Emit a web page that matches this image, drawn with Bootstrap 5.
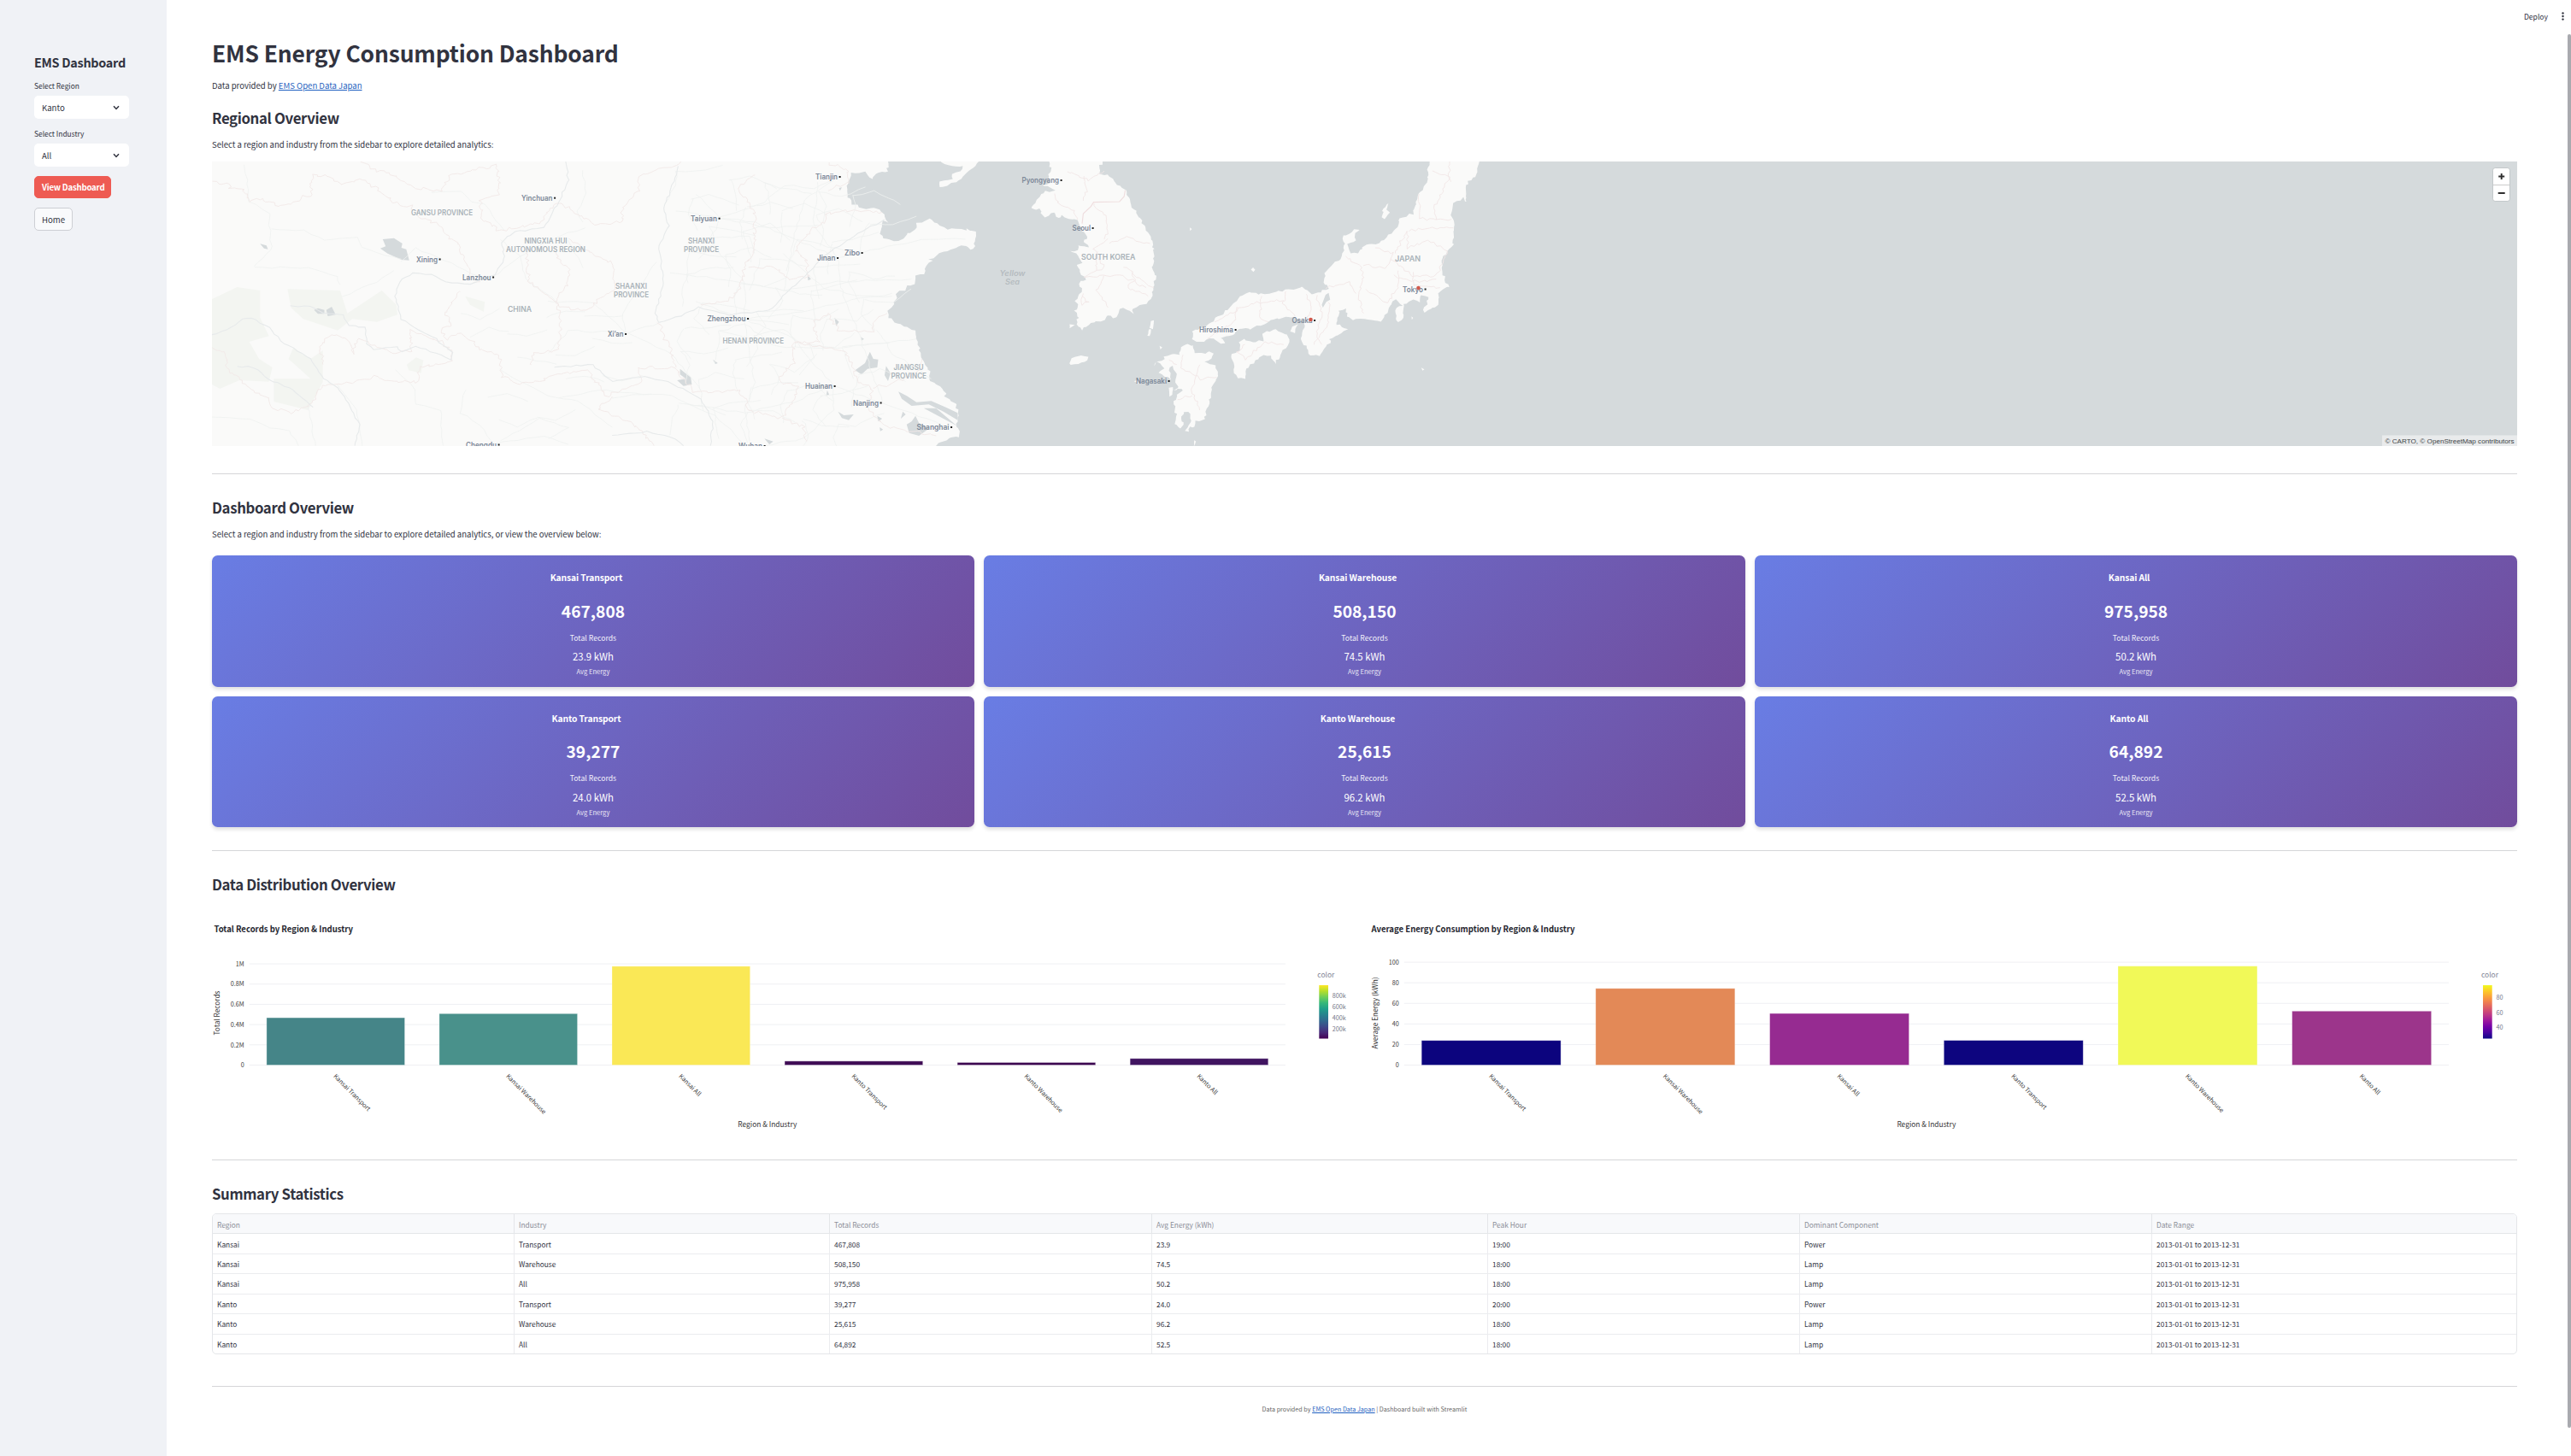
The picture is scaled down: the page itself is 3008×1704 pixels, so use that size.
<!DOCTYPE html>
<html lang="en">
<head>
<meta charset="utf-8">
<title>EMS Energy Consumption Dashboard</title>
<link href="https://cdn.jsdelivr.net/npm/bootstrap@5.3.0/dist/css/bootstrap.min.css" rel="stylesheet">
<style>
:root{--ink:#31333f;--panel:#f0f2f6}
html,body{height:100%}
body{font-family:"Noto Sans CJK JP","Noto Sans CJK SC","Open Sans",sans-serif;font-size:9.6px;line-height:16px;color:var(--ink);background:#fff;overflow:hidden}
.ems-shell{height:1704px}
.ems-side{width:195px;flex:none;background:var(--panel);padding:63px 44px 0 40px}
.ems-side h2{font-size:14.4px;line-height:20px;font-weight:600;margin:0 0 9px;white-space:nowrap;letter-spacing:-.27px}
.ems-label{font-size:8.4px;line-height:16px;margin-bottom:4px;display:block}
.ems-select{height:27px;background:#fff;border-radius:5px;padding:0 11px 0 9px;margin-bottom:9px}
.ems-btn{height:26px;border-radius:5px;font-size:9.6px;line-height:16px;padding:4px 9px;white-space:nowrap}
.ems-red,.ems-red:hover{background:#ee5b53;color:#fff;border:1px solid #ee5b53;font-weight:600;padding:4px 8px;width:90px;letter-spacing:-.2px;margin-top:11px}
.ems-plain{background:#f9fafc;color:var(--ink);border:1px solid #cdcfd4;height:27px;width:45px;padding:4px 0;margin-top:11px}
.ems-main{flex:1;padding:0 63px 0 53px;position:relative}
.ems-top{position:absolute;right:7px;top:11px;gap:15px;font-size:8.6px}
.ems-scroll{position:absolute;right:0;top:40px;width:4px;height:1631px;background:#a9aaaf;border-radius:2px}
h1{font-size:26.4px;line-height:36px;font-weight:700;margin:0;padding-top:44px;height:80px;letter-spacing:-.14px}
h3{font-size:16.8px;line-height:22px;height:22px;font-weight:600;margin:0;letter-spacing:-.36px}
.ems-p{margin:12px 0 0;height:16px;letter-spacing:-.02px}
a{color:#1f5fc0;text-decoration:underline}
.ems-rule{height:1px;background:#d5d6d8}
.ems-map{height:333px;margin-top:12px}
svg{display:block}
.ems-cards{display:grid;grid-template-columns:repeat(3,1fr);column-gap:10.67px;row-gap:11px;margin-top:17px}
.ems-kpi{height:153.5px;border-radius:6.67px;color:#fff;background:linear-gradient(135deg,#697de4 0%,#714c9c 100%);box-shadow:0 2.67px 4px rgba(0,0,0,.12);padding-top:17px;text-align:center}
.k-t{font-size:10.3px;font-weight:700;line-height:18px;margin-right:16px;letter-spacing:-.1px}
.k-n{font-size:19.2px;font-weight:700;line-height:28px;margin-top:15.5px}
.k-l{font-size:8.7px;line-height:16px;margin-top:10px;opacity:.92}
.k-e{font-size:11.4px;line-height:18px;margin-top:4.5px}
.k-s{font-size:7.6px;line-height:14px;margin-top:2px;opacity:.85}
.ems-charts{gap:11px}
.ems-stats{border:1px solid #e4e6e9;border-radius:5px;overflow:hidden;margin-top:12px;height:165px}
.ems-stats table{table-layout:fixed;width:100%;margin:0;font-size:8.35px;line-height:14px;border-collapse:separate;border-spacing:0}
.ems-stats td,.ems-stats th{height:23.43px;padding:0 5px;vertical-align:middle;border:0 solid #ebecef;border-bottom-width:1px;border-right-width:1px;color:var(--ink)}
.ems-stats th{background:#f8f9fb;color:#8b8e98;font-weight:400;border-color:#e4e6e9;padding-top:1px}
.ems-stats tr>:last-child{border-right-width:0}
.ems-stats tbody tr:last-child td{border-bottom-width:0}
.ems-foot{font-size:7.2px;color:#666;text-align:center;margin-top:18px}
</style>
<script src="https://cdn.jsdelivr.net/npm/bootstrap@5.3.0/dist/js/bootstrap.bundle.min.js"></script>
</head>
<body>
<div class="ems-shell d-flex">
<aside class="ems-side">
  <h2>EMS Dashboard</h2>
  <label class="ems-label">Select Region</label>
  <div class="ems-select d-flex align-items-center justify-content-between"><span>Kanto</span><svg width="8" height="6" viewBox="0 0 8 6"><path d="M1 1.2 4 4.4 7 1.2" fill="none" stroke="#31333f" stroke-width="1.5"/></svg></div>
  <label class="ems-label">Select Industry</label>
  <div class="ems-select d-flex align-items-center justify-content-between"><span>All</span><svg width="8" height="6" viewBox="0 0 8 6"><path d="M1 1.2 4 4.4 7 1.2" fill="none" stroke="#31333f" stroke-width="1.5"/></svg></div>
  <button class="btn ems-btn ems-red d-block">View Dashboard</button>
  <button class="btn ems-btn ems-plain d-block">Home</button>
</aside>
<main class="ems-main">
  <div class="ems-top d-flex align-items-center"><span>Deploy</span><svg width="5" height="12" viewBox="0 0 5 12"><g fill="#31333f"><circle cx="2.5" cy="2.4" r="1.2"/><circle cx="2.5" cy="6" r="1.2"/><circle cx="2.5" cy="9.6" r="1.2"/></g></svg></div>
  <div class="ems-scroll"></div>
  <h1>EMS Energy Consumption Dashboard</h1>
  <p class="ems-p">Data provided by <a href="#">EMS Open Data Japan</a></p>
  <h3 style="margin-top:19px">Regional Overview</h3>
  <p class="ems-p">Select a region and industry from the sidebar to explore detailed analytics:</p>
  <div class="ems-map">
  <svg id="map" width="2697" height="333" viewBox="248 189 2697 333">
    <rect x="248" y="189" width="2697" height="333" fill="#d5dadc"/>
    <g transform="translate(240 180) scale(.57398 .33333)">
      <g class="land" fill="#fafaf9">
        <path d="M0,0 L1395,0 1395,30 1392,45 1388,68 1370,66 1358,88 1345,66 1318,68 1312,90 1306,115 1308,150 1320,175 1335,190 1375,195 1385,215 1393,240 1380,235 1376,270 1382,298 1405,308 1425,302 1430,280 1445,270 1452,245 1475,229 1488,238 1490,242 1512,262 1529,265 1550,268 1550,262 1573,277 1567,305 1570,325 1560,338 1550,322 1535,325 1498,352 1475,372 1484,378 1470,395 1468,420 1450,430 1445,455 1430,465 1425,480 1412,485 1403,530 1392,545 1392,575 1410,595 1445,622 1455,670 1458,700 1468,740 1478,770 1480,800 1508,830 1508,855 1528,875 1536,910 1530,945 1537,965 1537,995 1515,1000 1488,1026 1488,1060 0,1060Z"/>
        <path d="M1498,0 L1500,30 1515,40 1530,45 1545,42 1540,62 1522,70 1524,90 1497,98 1497,118 1512,112 1520,102 1532,100 1545,80 1556,60 1566,50 1576,27 1578,0Z"/>
      </g>
      <g fill="#f3f5f1"><path d="M14,510 65,468 112,480 112,575 130,640 90,660 110,720 137,750 130,800 70,795 30,825 14,810Z"/><path d="M168,475 275,480 290,560 360,480 390,530 392,565 350,590 300,580 270,620 200,580 175,540Z"/><path d="M240,690 215,720 180,680 170,720 215,790 140,790 140,870 210,900 240,800Z"/><path d="M530,500 570,520 568,555 540,530Z M411,740 430,715 445,725 440,770 415,760Z"/></g>
      <g fill="#d5dadc">
        <path d="M362,300 385,296 402,315 400,330 410,335 416,374 400,372 372,350 357,332 368,325Z"/>
        <path d="M112,316 125,322 128,335 120,332Z M222,548 230,542 243,548 243,562 230,562Z M247,548 258,537 266,565 250,570Z"/>
        <path d="M1283,575 1292,590 1286,605Z M1336,643 1343,650 1338,656Z M1355,695 1362,720 1372,722 1370,750 1350,755 1338,775 1325,760 1345,735Z M1388,745 1397,770 1392,798 1385,778Z"/>
        <path d="M1413,835 1430,850 1450,872 1480,868 1510,890 1534,910 1534,935 1505,905 1475,880 1440,885 1420,860Z M1465,893 1490,893 1532,955 1505,930Z"/>
        <path d="M1448,920 1440,940 1430,950 1435,980 1455,990 1475,965 1455,945Z M1290,905 1302,918 1322,915 1312,935 1298,928Z M1370,920 1380,930 1372,940Z M1422,905 1428,915 1418,930Z M1375,960 1382,968 1376,974Z M1268,830 1272,845 1266,850Z M1245,832 1240,852Z"/>
        <path d="M968,755 990,785 992,810 975,815 962,795 980,790 968,775Z M1035,722 1045,735 1040,738Z M1228,425 1235,440 1229,445Z M1292,120 1298,118 1294,130Z M1140,1000 1158,1010 1150,1020Z"/>
      </g>
      <g id="roads" fill="none" stroke="#eff1f0" stroke-width=".8"></g>
      <g id="borders" fill="none" stroke="#f2e9e8" stroke-width=".9"></g>
      <g id="rivers" fill="none" stroke="#e7eaeb" stroke-width="1.1"></g>
    </g>
    <g transform="translate(1100 180) scale(.44643 .33333)">
      <g class="land" fill="#fafaf9">
        <path d="M285,0 L285,27 290,50 283,80 285,100 268,110 300,125 295,130 268,135 253,160 248,180 238,192 262,195 265,212 275,222 300,205 310,228 320,218 362,235 370,262 385,290 378,312 392,325 360,322 362,340 342,345 362,356 370,385 360,390 370,425 385,440 362,455 372,475 355,515 362,535 352,552 362,575 357,592 372,620 388,598 410,590 430,585 440,565 460,578 470,542 490,545 505,560 505,542 522,530 540,530 555,500 560,450 567,430 557,400 560,340 553,300 537,260 520,220 500,180 485,125 460,100 445,78 420,68 415,50 428,27 428,0Z"/>
        <path d="M338,735 345,718 370,708 388,712 386,725 362,738 342,740Z"/>
        <path d="M553,588 561,585 558,615 549,612Z M547,615 553,618 549,640 543,640Z"/>
        <path d="M1282,0 L1280,27 1277,100 1252,140 1240,210 1205,225 1195,265 1165,300 1140,315 1108,325 1097,348 1075,347 1068,318 1090,300 1085,290 1097,265 1085,268 1055,290 1060,325 1055,360 1030,390 1008,420 1005,450 1018,470 1000,480 1000,490 965,490 950,468 935,478 905,478 870,490 825,492 810,485 785,500 765,530 740,560 715,585 698,605 670,620 660,622 660,655 690,660 700,652 715,650 735,665 748,668 738,645 765,640 782,615 815,615 850,600 865,585 905,572 930,575 950,590 958,605 945,645 948,662 962,680 965,700 980,708 995,712 1005,685 1022,665 1022,650 1050,630 1066,618 1050,600 1040,600 1045,550 1065,545 1065,570 1080,583 1120,580 1155,588 1170,555 1180,535 1192,510 1210,530 1193,545 1193,578 1203,588 1213,572 1215,530 1230,520 1240,512 1255,520 1255,505 1262,495 1278,502 1275,525 1267,545 1270,555 1285,545 1303,530 1305,485 1335,465 1325,450 1315,410 1318,360 1345,320 1347,240 1338,210 1345,170 1372,155 1380,172 1378,120 1385,95 1405,80 1415,27 1415,0Z"/>
        <path d="M938,598 930,615 930,630 917,625 922,608Z"/>
        <path d="M797,650 810,660 845,655 845,632 862,622 880,618 910,635 914,665 890,705 880,735 865,712 845,708 820,735 800,765 798,790 778,790 768,770 770,740 760,712 785,690 785,665Z"/>
        <path d="M650,668 663,675 665,700 695,705 705,692 714,700 712,720 692,730 722,742 725,765 730,775 720,800 712,820 705,870 692,935 670,935 668,955 655,960 650,978 643,972 658,945 653,905 640,905 632,930 640,955 630,962 613,945 618,915 612,880 622,845 637,835 625,822 617,800 620,780 610,748 600,752 605,790 590,785 575,768 585,750 570,730 590,725 588,715 605,705 627,705 630,682Z"/>
        <path d="M600,820 610,820 608,845 600,852Z M612,830 625,820 620,830Z M508,800 518,795 520,808Z M566,730 560,745Z M665,1005 670,1010 665,1028Z M575,675 582,680 577,686Z"/>
        <path d="M1175,173 1170,195 1178,205 1165,230 1156,222 1162,205 1158,200Z M820,400 826,408 820,416 814,408Z M655,260 660,265 655,270Z M1236,570 1240,575 1236,583Z M1260,752 1268,758 1264,762Z M340,600 352,600 340,614Z"/>
      </g>
      <path d="M1018,488 1022,512 1012,520 1003,540 1000,530 1010,495Z" fill="#d5dadc"/>
      <g id="jborders" fill="none" stroke="#f2e7e6" stroke-width=".9"></g>
      <path d="M372,245 375,210 395,185 402,170 470,168 482,150 485,128" fill="none" stroke="#efdedf" stroke-width="1.2" vector-effect="non-scaling-stroke"/>
    </g>
    <g id="labels"></g>
    <g transform="translate(2917 197)">
      <rect x="-.5" y="-.5" width="20" height="39" rx="2.7" fill="#fff" stroke="#c3c8ca"/>
      <path d="M0 19.5H19.5" stroke="#ccc"/>
      <path d="M9.700 6V13M6.200 9.500H13.200M5.700 29H13.700" stroke="#2f2f2f" stroke-width="1.900"/>
    </g>
    <rect x="2787" y="509.500" width="158" height="12.500" fill="#e9ebec"/>
    <text x="2790.500" y="518.500" font-size="8" fill="#3c3f45" textLength="151" lengthAdjust="spacingAndGlyphs" font-family="Liberation Sans, sans-serif">© CARTO, © OpenStreetMap contributors</text>
  </svg>
  </div>
  <div class="ems-rule" style="margin-top:32px"></div>
  <h3 style="margin-top:28px">Dashboard Overview</h3>
  <p class="ems-p">Select a region and industry from the sidebar to explore detailed analytics, or view the overview below:</p>
  <section class="ems-cards">
    <div class="ems-kpi"><div class="k-t">Kansai Transport</div><div class="k-n">467,808</div><div class="k-l">Total Records</div><div class="k-e">23.9 kWh</div><div class="k-s">Avg Energy</div></div>
    <div class="ems-kpi"><div class="k-t">Kansai Warehouse</div><div class="k-n">508,150</div><div class="k-l">Total Records</div><div class="k-e">74.5 kWh</div><div class="k-s">Avg Energy</div></div>
    <div class="ems-kpi"><div class="k-t">Kansai All</div><div class="k-n">975,958</div><div class="k-l">Total Records</div><div class="k-e">50.2 kWh</div><div class="k-s">Avg Energy</div></div>
    <div class="ems-kpi"><div class="k-t">Kanto Transport</div><div class="k-n">39,277</div><div class="k-l">Total Records</div><div class="k-e">24.0 kWh</div><div class="k-s">Avg Energy</div></div>
    <div class="ems-kpi"><div class="k-t">Kanto Warehouse</div><div class="k-n">25,615</div><div class="k-l">Total Records</div><div class="k-e">96.2 kWh</div><div class="k-s">Avg Energy</div></div>
    <div class="ems-kpi"><div class="k-t">Kanto All</div><div class="k-n">64,892</div><div class="k-l">Total Records</div><div class="k-e">52.5 kWh</div><div class="k-s">Avg Energy</div></div>
  </section>
  <div class="ems-rule" style="margin-top:27px"></div>
  <h3 style="margin-top:28px">Data Distribution Overview</h3>
  <div class="ems-charts d-flex">
    <svg id="c1" width="1343" height="311" viewBox="248 1046 1343 311"></svg>
    <svg id="c2" width="1343" height="311" viewBox="1602 1046 1343 311"></svg>
  </div>
  <div class="ems-rule"></div>
  <h3 style="margin-top:28px">Summary Statistics</h3>
  <div class="ems-stats">
  <table>
    <colgroup><col style="width:353px"><col style="width:369px"><col style="width:377px"><col style="width:393px"><col style="width:365px"><col style="width:412px"><col></colgroup>
    <thead><tr><th>Region</th><th>Industry</th><th>Total Records</th><th>Avg Energy (kWh)</th><th>Peak Hour</th><th>Dominant Component</th><th>Date Range</th></tr></thead>
    <tbody>
    <tr><td>Kansai</td><td>Transport</td><td>467,808</td><td>23.9</td><td>19:00</td><td>Power</td><td>2013-01-01 to 2013-12-31</td></tr>
    <tr><td>Kansai</td><td>Warehouse</td><td>508,150</td><td>74.5</td><td>18:00</td><td>Lamp</td><td>2013-01-01 to 2013-12-31</td></tr>
    <tr><td>Kansai</td><td>All</td><td>975,958</td><td>50.2</td><td>18:00</td><td>Lamp</td><td>2013-01-01 to 2013-12-31</td></tr>
    <tr><td>Kanto</td><td>Transport</td><td>39,277</td><td>24.0</td><td>20:00</td><td>Power</td><td>2013-01-01 to 2013-12-31</td></tr>
    <tr><td>Kanto</td><td>Warehouse</td><td>25,615</td><td>96.2</td><td>18:00</td><td>Lamp</td><td>2013-01-01 to 2013-12-31</td></tr>
    <tr><td>Kanto</td><td>All</td><td>64,892</td><td>52.5</td><td>18:00</td><td>Lamp</td><td>2013-01-01 to 2013-12-31</td></tr>
    </tbody>
  </table>
  </div>
  <div class="ems-rule" style="margin-top:37px"></div>
  <div class="ems-foot">Data provided by <a href="#">EMS Open Data Japan</a> | Dashboard built with Streamlit</div>
</main>
</div>
<script>
const $=id=>document.getElementById(id);
// deterministic noise for coastlines and boundaries
let seed=7;const rnd=()=>(seed=(seed*16807)%2147483647)/2147483647-.5;
function rough(pts,amp,step,close){
  const out=[];const n=close?pts.length:pts.length-1;
  for(let i=0;i<n;i++){const a=pts[i],b=pts[(i+1)%pts.length];
    const k=Math.max(1,Math.round(Math.hypot(b[0]-a[0],b[1]-a[1])/step));
    for(let j=0;j<k;j++){const t=j/k;out.push([(a[0]+(b[0]-a[0])*t+rnd()*amp).toFixed(1),(a[1]+(b[1]-a[1])*t+rnd()*amp*1.4).toFixed(1)]);}}
  if(!close)out.push(pts[pts.length-1]);
  return 'M'+out.map(p=>p.join(',')).join(' ')+(close?'Z':'');
}
const parse=s=>{const v=s.match(/-?[\d.]+/g).map(Number),r=[];for(let i=0;i<v.length;i+=2)r.push([v[i],v[i+1]]);return r;};
document.querySelectorAll('.land path').forEach(p=>p.setAttribute('d',p.getAttribute('d').split('Z').filter(s=>s.trim()).map(s=>rough(parse(s),s.length>150?6:2,9,true)).join('')));
function lines(id,arr,amp,step){$(id).innerHTML=arr.map(s=>`<path vector-effect="non-scaling-stroke" d="${rough(parse(s),amp,step,false)}"/>`).join('');}
lines('borders',[
 '14,98 50,105 50,120 78,125 90,165 115,160 150,185 190,165 195,150 215,148 220,70 250,80 285,110 320,88 350,125 380,165 400,180 420,185 440,225 480,250 500,300 515,310 520,350 535,390 540,430 560,450 545,455',
 '320,27 350,60 380,70 410,105 430,120 480,128 500,75 540,60 590,40 600,80 598,140 560,160 565,230 600,270 680,245 700,200 720,170 760,210 800,250 850,235 850,190 885,130 885,80 920,55 950,50 970,27',
 '520,480 500,530 490,560 500,600 480,620 490,650 520,630 550,660 560,690 600,710 605,780 640,810 690,800 700,780 780,760 820,850 890,800 880,750 960,750 975,790 1000,840 1090,830 1110,900 1175,930 1200,870 1210,820 1175,800 1170,780 1200,740 1200,660 1250,660 1240,590 1270,560 1290,620 1360,620 1370,570 1390,560',
 '925,590 935,640 950,690 960,750','14,680 40,700 45,760 100,830 130,860 135,890 175,910 210,890 240,810 310,800 350,780 370,800 430,800 440,750 500,730 505,700 480,660 420,620 420,690 390,700 310,650 300,700 290,650 260,635 235,670 240,740',
 '740,300 800,360 830,380 835,470 800,515 780,550 720,540 715,510 740,460 740,400 720,370 715,330','1120,75 1085,120 1120,200 1120,330 1100,400 1090,480 1060,520 1010,530','1110,395 1160,400 1190,440 1230,430 1225,370 1200,340 1240,260 1265,240 1265,210 1310,200 1380,205',
 '1270,30 1310,60 1315,100 1275,120 1270,130','655,340 660,450 715,520 725,580 720,690 670,700 665,740','1200,660 1260,680 1300,690 1320,740 1330,800 1360,820 1350,900 1390,960 1490,990','830,850 800,900 850,930 880,960 915,1025','1175,930 1220,960 1225,1010','1360,820 1400,810 1460,760 1460,720'
],8,7);
const roads=['80,40 85,90 90,165 130,210 135,340 100,395','135,265 200,270 245,300 310,290 320,330 400,370','100,398 210,400 270,430 275,460','280,500 350,450 385,410','460,135 520,130 545,170 570,180 610,270','600,300 640,360 655,440 715,520','590,430 650,350 720,290 775,260','770,60 775,140 760,200 770,240','740,300 770,400','700,520 790,520 860,630 930,590','860,630 740,620 700,700','860,630 850,560 920,380','860,630 950,700 1010,830','400,380 430,330 560,430','14,925 90,930 130,960 170,970 190,1025','210,885 225,1025','270,810 310,900 320,1025','390,760 430,830 430,880 480,900 485,1025','530,830 520,910 560,950 590,1020','590,1020 690,990 740,1020','600,1010 680,930 740,960 700,1000','1000,140 1050,225 1140,170 1180,110 1240,120 1290,80','1050,225 1030,300 1060,370 1100,450 1100,580','1050,225 1120,240 1290,365 1340,345 1460,300 1550,300','1100,580 1200,560 1300,520 1400,490','1100,580 1110,700 1120,800 1100,900 1110,1010','1100,580 1200,650 1280,815 1375,870 1520,960','1250,100 1240,250 1290,365 1300,500 1330,620 1380,870','1180,350 1260,470 1340,500 1400,500','950,420 1060,440 1180,480 1290,450 1440,440','1000,520 1100,580 1190,600','1290,80 1220,160 1200,300 1180,480','960,200 1050,225 1150,260 1250,250','980,880 1100,910 1200,870 1280,815','1280,815 1280,900 1220,1000 1140,1025','720,860 800,830 950,850 1040,920 1100,1020','600,760 700,850 760,870 830,960','1050,620 1170,680 1290,680 1450,650','1370,620 1400,700 1480,790','1000,300 1110,290 1120,350'];
// secondary road net over the densely connected east
for(let i=0;i<46;i++){const x=960+(i*137)%400,y=60+(i*211)%900;roads.push(`${x},${y} ${x+45+rnd()*30},${y+rnd()*60} ${x+95},${y+rnd()*90}`);roads.push(`${x},${y} ${x+rnd()*40},${y+50} ${x+rnd()*50},${y+110}`);}
for(let i=0;i<14;i++){const x=520+(i*97)%330,y=560+(i*73)%430;roads.push(`${x},${y} ${x+40},${y+rnd()*60} ${x+80},${y+rnd()*60}`);}
lines('roads',roads,5,18);
lines('rivers',['14,635 45,620 75,580 95,575 130,610 160,665 215,720 240,790 270,820 300,900 315,950 305,1025','175,535 215,535 240,560 280,565 295,600 325,610 330,670 345,685 390,680 400,695 430,675 480,705 500,725 505,700 470,650 400,580 387,500 400,440 425,418 460,425 490,450 540,455 590,425 610,370 605,310 630,275 690,260 720,170 740,90 735,27','965,45 950,120 935,190 945,250 925,320 935,450 918,560 925,592 960,575 1005,540 1070,565 1150,550 1190,480 1230,420 1260,360 1330,280 1385,230','710,750 790,740 830,800 895,780 945,800 1010,860 1035,940 1030,1025','65,745 100,750 130,790 180,830 220,890','830,990 900,975 960,1000 975,1025'],4,12);
lines('jborders',['300,140 310,175 350,200 360,230','375,75 385,120 375,165','330,60 390,95 430,60','400,175 435,220 440,270 430,300','440,310 490,295 550,315','440,300 400,330 430,400 380,430 420,430 480,430 540,470','410,340 410,410','480,395 500,410 510,440 490,470 545,500','370,500 390,520 370,530 375,490','430,430 410,480 440,540','500,420 560,470','1255,140 1255,225 1300,235 1340,230','1300,230 1295,190 1335,80 1290,60','1335,100 1335,27','1225,270 1290,260 1345,260','1190,350 1225,270 1225,330 1280,305 1330,340 1300,430 1240,430 1180,370','1060,360 1100,390 1110,430 1095,500 1110,560','1110,390 1170,400 1190,350 1140,330','1115,480 1170,520 1200,470 1200,410','1190,430 1250,450 1300,440','1240,420 1240,460 1310,470','1012,470 1070,450 1090,490','960,490 975,540 960,590','985,500 1000,560 985,640 1000,670','1020,520 1015,600 980,670','905,480 900,530 930,570','840,495 840,580 860,590','720,590 790,540 840,520 900,515','780,540 770,590 700,650','800,665 780,700 800,720 850,660 900,670','635,705 630,750 680,790 725,785','680,740 660,830 680,900','620,860 660,850','600,720 620,740'],7,9);

const F='"Noto Sans CJK JP",sans-serif';
const txt=(s,x,y,o)=>`<text x="${x}" y="${y}" font-size="${o.fs}" fill="${o.c}" text-anchor="${o.a||'middle'}" font-weight="${o.w||400}" ${o.tl?`textLength="${o.tl}" lengthAdjust="spacingAndGlyphs"`:''} ${o.x||''} style='font-family:${o.f||F}'>${s}</text>`;
// map labels: [text, left, width, centre y]; cities carry a dot
const regions=[['GANSU PROVINCE',481,72,248.7],['NINGXIA HUI',613.5,50,282],['AUTONOMOUS REGION',592,93,292],['SHANXI',805,31,282],['PROVINCE',800,41,292],['SHAANXI',720,37,335],['PROVINCE',718,41,345],['CHINA',594,28,362],['HENAN PROVINCE',845.5,71.5,398.7],['JIANGSU',1045.5,35,430],['PROVINCE',1042.5,41.5,440],['SOUTH KOREA',1265,63.5,301],['JAPAN',1632,30,303]];
const cities=[['Yinchuan',610,36.5,231.7],['Taiyuan',808,31,255.7],['Tianjin',954,26,207],['Xining',487,25,303.5],['Lanzhou',541,33.5,324.5],['Zibo',988,18,296],['Jinan',956,21.5,302],['Zhengzhou',827.5,45,373],['Xi\u2019an',711,18.5,391],['Huainan',942,32,452],['Nanjing',998,30,471.5],['Shanghai',1072.5,38,500],['Chengdu',545,36,520.5],['Wuhan',864,28,522],['Pyongyang',1195.5,43.5,211],['Seoul',1254.5,21.5,267],['Hiroshima',1403,40,386],['Nagasaki',1329,36,446],['Osaka',1511.5,24,375],['Tokyo',1641,24,338.5]];
const G='Inter,"Open Sans",sans-serif';
$('labels').innerHTML=regions.map(r=>txt(r[0],r[1],r[3]+3.1,{fs:8.4,c:'#a9b2b8',a:'start',w:600,tl:r[2],f:G})).join('')
+cities.map(r=>txt(r[0],r[1],r[3]+3,{fs:8.8,c:'#7c8898',a:'start',w:600,tl:r[2],f:G})+`<rect x="${r[1]+r[2]+1.6}" y="${r[3]-1}" width="2" height="2" fill="#222"/>`).join('')
+txt('Yellow',1184.5,323,{fs:8.6,c:'#b5bcc0',w:600,f:G,tl:30,x:'font-style="italic"'})+txt('Sea',1184.5,332.5,{fs:8.6,c:'#b5bcc0',w:600,f:G,tl:17,x:'font-style="italic"'})
+'<circle cx="1533.5" cy="374" r="2.3" fill="#d2584b"/><circle cx="1659.5" cy="337" r="2.3" fill="#d2584b"/>';

const names=['Kansai Transport','Kansai Warehouse','Kansai All','Kanto Transport','Kanto Warehouse','Kanto All'];
function chart(id,o){
  let s=`<defs><linearGradient id="g${id}" x1="0" y1="1" x2="0" y2="0">${o.ramp.map((c,i)=>`<stop offset="${i/(o.ramp.length-1)}" stop-color="${c}"/>`).join('')}</linearGradient></defs>`;
  s+=txt(o.title,o.tx,1091.2,{fs:9.9,c:'#262730',a:'start',w:700,tl:o.tw});
  o.ticks.forEach(t=>{const y=1246.5-t[0]*o.k;s+=`<path d="M${o.x0} ${y}H${o.x1}" stroke="#eff0f3"/>`+txt(t[1],o.x0-6,y+2.7,{fs:7.2,c:'#3a3a3a',a:'end'});});
  const slot=(o.x1-o.x0)/6;
  o.v.forEach((v,i)=>{const x=o.x0+slot*(i+.1),h=v*o.k,cx=o.x0+slot*(i+.5);
    s+=`<rect x="${x}" y="${1246.5-h}" width="${slot*.8}" height="${h}" fill="${o.col[i]}" stroke="#fff" stroke-opacity=".4" stroke-width=".8"/>`;
    s+=`<g transform="translate(${cx-3} 1260) rotate(45)">${txt(names[i],0,0,{fs:7.3,c:'#3a3a3a',a:'start'})}</g>`;});
  s+=txt('Region &amp; Industry',(o.x0+o.x1)/2,1319.3,{fs:8.4,c:'#333',tl:69});
  s+=`<g transform="translate(${o.yx} 1185.5) rotate(-90)">${txt(o.yt,0,0,{fs:8.4,c:'#333',tl:o.yl})}</g>`;
  s+=txt('color',o.bx-2,1144.2,{fs:8.4,c:'#808495',a:'start',tl:20});
  s+=`<rect x="${o.bx}" y="1153" width="10.7" height="62.5" fill="url(#g${id})"/>`;
  o.bt.forEach(t=>s+=txt(t[1],o.bx+15.5,t[0]+2.7,{fs:7.2,c:'#747889',a:'start'}));
  $(id).innerHTML=s;
}
chart('c1',{title:'Total Records by Region &amp; Industry',tx:250.5,tw:162.5,x0:291.7,x1:1504,k:118.5,ticks:[[0,'0'],[.2,'0.2M'],[.4,'0.4M'],[.6,'0.6M'],[.8,'0.8M'],[1,'1M']],v:[.467808,.50815,.975958,.039277,.025615,.064892],col:['#458588','#49918b','#fae856','#3f0c55','#3c0750','#401460'],yt:'Total Records',yl:52,yx:257,bx:1543.3,ramp:['#440154','#482878','#3e4989','#31688e','#26828e','#1f9e89','#35b779','#6ece58','#b5de2b','#fde725'],bt:[[1165.5,'800k'],[1178.5,'600k'],[1191.5,'400k'],[1204.5,'200k']]});
chart('c2',{title:'Average Energy Consumption by Region &amp; Industry',tx:1604.5,tw:238,x0:1642.8,x1:2865,k:1.204,ticks:[[0,'0'],[20,'20'],[40,'40'],[60,'60'],[80,'80'],[100,'100']],v:[23.9,74.5,50.2,24,96.2,52.5],col:['#0c047e','#e38957','#962b91','#0d057f','#f1f958','#9c358b'],yt:'Average Energy (kWh)',yl:84,yx:1611.5,bx:2905,ramp:['#0d0887','#46039f','#7201a8','#9c179e','#bd3786','#d8576b','#ed7953','#fb9f3a','#fdca26','#f0f921'],bt:[[1167.5,'80'],[1185,'60'],[1202.5,'40']]});
</script>
</body>
</html>
